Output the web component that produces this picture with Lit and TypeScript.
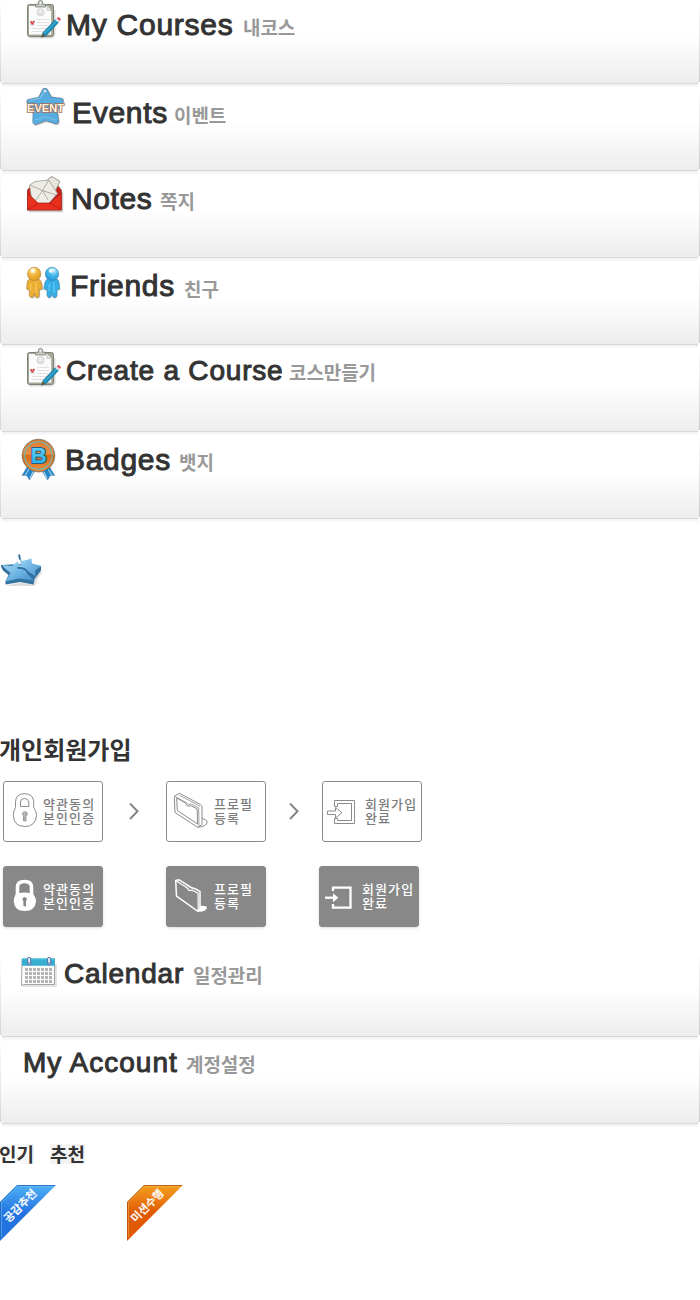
import { LitElement, html, css, svg, nothing } from "lit";
import { customElement, property } from "lit/decorators.js";

const clipboard = svg`
  <path d="M9 37.8H32L34.8 35V10" fill="none" stroke="#000" stroke-opacity=".14" stroke-width="1.4"/>
  <rect x="7.5" y="4.5" width="26" height="32" rx="2" fill="#a3a897" stroke="#7d8372"/>
  <path d="M9 6H27.5L31.2 9.8V34.6H9Z" fill="#fbfbfb"/>
  <path d="M27 6V10.5H31.5Z" fill="#e4e6e2" stroke="#b5b9b0" stroke-width=".6"/>
  <path d="M15.5 7V4.2H18.4V1.4Q20.5-.8 22.6 1.4V4.2H25.5V7Z" fill="#c3c7c4" stroke="#858a83" stroke-width=".9"/>
  <circle cx="20.5" cy="2.6" r=".9" fill="#fff"/>
  <circle cx="20.5" cy="12.3" r="3.5" fill="#f4f4f4" stroke="#c5c5c5" stroke-width=".9"/>
  <path d="M18.6 13Q20.5 15.2 22.4 13M19.3 10.8V11.6M21.7 10.8V11.6" fill="none" stroke="#b5b5b5" stroke-width=".8"/>
  <path d="M17 19.5H29M17 22.5H29M17 25.5H28M12 28.5H27M12 31.5H24" stroke="#dedede" stroke-width=".9"/>
  <rect x="11" y="21.5" width="3" height="3.4" fill="none" stroke="#999" stroke-width=".6"/>
  <path d="M10.6 21.2L12.3 23.8L14.3 20.8" fill="none" stroke="#e22b2b" stroke-width="1.2"/>
  <path d="M21.6 37.2L23 32.6L35.6 19.3L38.8 22.2L26 35.8Z" fill="#1b8fba" stroke="#176f95" stroke-width=".6"/>
  <path d="M24.3 33.6L36.8 20.6" stroke="#55bddd" stroke-width="1"/>
  <path d="M21.3 37.6L22.6 33.4L25.4 36Z" fill="#6d5638"/>
  <path d="M35 19.8L36.8 17.9L40 20.9L38.2 22.8Z" fill="#d9dee2"/>
  <path d="M36.8 18Q38.2 16.4 39.9 17.8T40 20.9Z" fill="#da3b47"/>`;

const starPoints = "25,4 29.8,12.8 40.5,14 34.3,22.2 35.8,34 25.5,30.8 15.6,34.6 16,22.6 9.8,14.8 20.4,12.8";
const eventStar = svg`
  <g stroke-linejoin="round">
    <polygon points=${starPoints} transform="translate(1 1.2)" fill="#000" stroke="#000" stroke-width="6" opacity=".2"/>
    <polygon points=${starPoints} fill="#5f88a2" stroke="#5f88a2" stroke-width="6.4"/>
    <polygon points=${starPoints} fill="#58ade0" stroke="#58ade0" stroke-width="4.8"/>
  </g>
  <path d="M9.5 13.2L20 11.4L23.6 4.6" stroke="#86caf0" fill="none"/>
  <path d="M15 33L25.5 29.4L36 33.2" stroke="#80c6ee" fill="none" stroke-width=".8"/>
  <circle cx="25" cy="4" r="1.5" fill="#e5f5ff" stroke="#7599ae" stroke-width=".4"/>
  <text class="event" x="7" y="25.3" textLength="37" lengthAdjust="spacingAndGlyphs">EVENT</text>`;

const envelope = svg`
  <path d="M9 37.4H42.5V18" fill="none" stroke="#000" stroke-opacity=".2" stroke-width="1.5"/>
  <path d="M7.5 16L11 12H38L41.3 16V36H7.5Z" fill="#c9221c" stroke="#84201b" stroke-width=".7"/>
  <path d="M24 12L28.5 4.6L32 2.6L39.6 7L38.7 10L34 20L24 17Z" fill="#e7e6dd" stroke="#85827a" stroke-width=".8"/>
  <path d="M9.5 11L15 7.6L28.5 6L37.5 19.5L28 30H18L11.5 24Z" fill="#eeede5" stroke="#9b988f" stroke-width=".8"/>
  <path d="M10 11L22.5 16.6L28.5 6.4M22.5 16.6L15.5 26.5M22.5 16.6L36.5 21M22.5 16.6L28 26" fill="none" stroke="#a8a59a" stroke-width=".9"/>
  <path d="M7.5 19L18 29H30L41.3 19V36H7.5Z" fill="#e9301f" stroke="#9d2118" stroke-width=".7"/>
  <path d="M7.8 35.7L18 29M41 35.7L30 29" stroke="#ba231a" stroke-width=".9"/>`;

const personBody = "M10.5 17.5Q7.4 18.5 7 22L6.6 28Q7.6 29.4 9.2 28V34.5Q9.6 37.2 13 36.2L14.2 32.5L15.4 36.2Q18.6 37.2 19.2 34.5V28Q21.2 29.2 22.4 27.6L21.4 22Q20.8 18.5 17.6 17.5Z";
const friends = svg`
  <defs>
    <radialGradient id="gold" cx=".4" cy=".25" r=".8"><stop stop-color="#fff3be"/><stop offset=".45" stop-color="#f2b43a"/><stop offset="1" stop-color="#dc9b20"/></radialGradient>
    <radialGradient id="sky" cx=".4" cy=".25" r=".8"><stop stop-color="#dcf7ff"/><stop offset=".45" stop-color="#45b9ec"/><stop offset="1" stop-color="#2097d5"/></radialGradient>
  </defs>
  <g transform="translate(1 1)" opacity=".22"><path d=${personBody}/><path d=${personBody} transform="translate(17 0)"/></g>
  <g fill="#edae35" stroke="#a8823f" stroke-width=".6"><path d=${personBody}/><circle cx="14.2" cy="12.9" r="6.7" fill="url(#gold)"/></g>
  <g fill="#36aee7" stroke="#3f87ad" stroke-width=".6" transform="translate(46.2 0) scale(-1 1)"><path d=${personBody}/><circle cx="14.2" cy="12.9" r="6.7" fill="url(#sky)"/></g>
  <circle cx="12.9" cy="9.7" r="2" fill="#fff" opacity=".85"/><circle cx="30.7" cy="9.7" r="2" fill="#fff" opacity=".85"/>
  <path d="M11 22.5L10.4 30M16 21V32" stroke="#f8cc68"/><path d="M29.5 22.5L29 30M34 21V32" stroke="#6ed0f6"/>`;

const medal = svg`
  <defs><linearGradient id="bronze" x1="0" y1="0" x2="0" y2="1"><stop stop-color="#e0782c"/><stop offset=".45" stop-color="#e98f48"/><stop offset=".5" stop-color="#d96a18"/><stop offset="1" stop-color="#f0913d"/></linearGradient>
  <linearGradient id="ice" x1="0" y1="0" x2="0" y2="1"><stop stop-color="#72d8fa"/><stop offset="1" stop-color="#1eaae6"/></linearGradient></defs>
  <path d="M7 32L2 40.6L6.6 40.4L9.5 45L16 34ZM29.5 32L34.8 40.6L30.4 40.4L27.5 45L21 34Z" fill="#2387cc" stroke="#6d8ea3" stroke-width=".6"/>
  <path d="M9 34L5.3 40.2M28 34L31.7 40.2M14 35L10 43M23 35L27 43" stroke="#cdeafa" stroke-width=".9"/>
  <circle cx="19" cy="21.2" r="16.6" fill="#000" opacity=".15"/>
  <circle cx="18.4" cy="20.5" r="16.3" fill="url(#bronze)" stroke="#77705f" stroke-width=".8"/>
  <circle cx="18.4" cy="20.5" r="13.7" fill="none" stroke="#62bdb8" stroke-width="1.1"/>
  <text class="medal-letter" x="18.8" y="28">B</text>`;

const calendar = svg`
  <path d="M3 33H36V11" fill="none" stroke="#000" stroke-opacity=".15" stroke-width="1.5"/>
  <path d="M2 6H34.5V31.5H4.5L1.5 32.5Z" fill="#fcfcfc" stroke="#858d91" stroke-width=".8"/>
  <path d="M2 5.5H35V12.7H2Z" fill="#36afd0"/><path d="M2 5.8H35" stroke="#68d1e8"/>
  <g fill="#b5b5b5">${[0, 1, 2, 3].map(r => [0, 1, 2, 3, 4, 5, 6].map(c => svg`<rect x=${5 + c * 4} y=${15 + r * 4} width="3" height="3"/>`))}</g>
  <g fill="#dfe6f3" stroke="#48679f" stroke-width=".9"><circle cx="9.3" cy="10" r="1.9"/><circle cx="29.3" cy="10" r="1.9"/><rect x="7.5" y="4.3" width="3.2" height="6" rx="1.6"/><rect x="27.5" y="4.3" width="3.2" height="6" rx="1.6"/></g>`;

@customElement("section-banner")
class SectionBanner extends LitElement {
  @property() heading = "";
  @property() sub = "";
  @property({ attribute: false }) icon: unknown = null;
  static styles = css`
    :host { display: flex; align-items: flex-start; box-sizing: border-box; width: 700px; height: 87px;
      background:
        linear-gradient(#fff, #d5d5d5) 0 0 / 1px 82px no-repeat,
        linear-gradient(#fff, #c9c9c9) 699px 0 / 1px 82px no-repeat,
        linear-gradient(#d8d8d8, #d8d8d8) 2px 83px / 696px 1px no-repeat,
        linear-gradient(#f0f0f0, #fbfbfb) 2px 84px / 696px 3px no-repeat,
        linear-gradient(#fff 0, #fff 36px, #ededed 83px) 1px 0 / 698px 83px no-repeat, #fff;
      font-family: "Liberation Sans", Arial, sans-serif; white-space: nowrap; }
    svg { flex: none; width: 42px; height: 48px; margin-left: 20px; overflow: visible; }
    .title { flex: none; width: var(--w); margin: var(--ty) 0 0 var(--tx); line-height: 40px; font-size: var(--fs, 30px); letter-spacing: var(--ls, .5px);
      color: #333; -webkit-text-stroke: 1px #333; }
    .sub { margin-top: var(--sy); line-height: 28px; font-size: 19px; font-weight: 700; color: #999; font-family: "Noto Sans CJK KR", sans-serif; letter-spacing: -.1px; }
    .event { font: 700 10.5px "Liberation Sans", sans-serif; fill: #fff2df; stroke: #a0705a; stroke-width: 1.6px; paint-order: stroke; }
    .medal-letter { font: 700 22px "Liberation Sans", sans-serif; text-anchor: middle; fill: url(#ice); stroke: #235f84; stroke-width: 2px; paint-order: stroke; }
  `;
  render() {
    return html`${this.icon ? html`<svg viewBox="0 0 42 48">${this.icon}</svg>` : nothing}
      <span class="title">${this.heading}</span><span class="sub">${this.sub}</span>`;
  }
}

const lock = (on: boolean) => on
  ? svg`<path d="M14.5 30V21Q14.5 15.5 21.5 15.5T28.5 21V30" fill="none" stroke="#fff" stroke-width="3.6"/>
      <path d="M12.5 28.5Q16 26.5 21.5 26.5T30.5 28.5Q33 31.5 33 35.5Q32 45 21.8 45T10.8 35.5Q10.8 31.5 12.5 28.5Z" fill="#fff"/>
      <path d="M21.6 31.2A2.1 2.1 0 0 1 23 35L23.1 40.3H20.5L20.3 35A2.1 2.1 0 0 1 21.6 31.2Z" fill="#888"/>`
  : svg`<g fill="none" stroke="#8c8c8c"><path d="M12.5 26.5V20.5Q13 12.7 21.5 12.7T30.7 20.5V26.5Q33.5 30 33.5 34.5Q32.5 45.5 21.8 45.5T10.3 34.5Q10.3 30 12.5 26.5Z"/>
      <path d="M17.5 25.5V21Q17.5 17.5 21.5 17.5T25.8 21V25.5Z"/><path d="M21.6 31A2 2 0 0 1 22.9 34.8V39.8H20.6V34.8A2 2 0 0 1 21.6 31Z" fill="#bbb"/></g>`;

const folder = (on: boolean) => on
  ? svg`<path d="M33 40Q41 39 41 42Q39 46.5 31 45.5Z" fill="#fff"/>
      <path d="M9.7 14.5L13 13.7L25 21.5L29 22.7L34 25.5L34 42.5L31.5 45L10.5 30.2Z" fill="#888" stroke="#fff" stroke-width="1.5"/>
      <path d="M10.5 15L21 21.8L23.2 24.5L26 24.2L32 27.2L32.3 44" fill="none" stroke="#fff" stroke-width="1.2"/>`
  : svg`<g fill="#fff" stroke="#8c8c8c"><path d="M34 37.5Q42 38 41 42Q39 46 32 46Z"/>
      <path d="M8.3 15.3L13.5 12.3L34.5 23.5Q36 24.3 36 26V43.5L32 46.5L9 31.5Z"/>
      <path d="M10.7 17L19.5 22L21.5 25L25.5 24.8L31.2 28L31.5 43L11.3 29.5Z"/><path d="M9 15.5L20.5 21.8L22.5 23.7L24.8 22.8L32.7 27L33 46M13.5 14.3L34 25.2" fill="none" stroke-width=".8"/></g>`;

const enter = (on: boolean) => on
  ? svg`<path d="M14 25V21.7H31.5V41.7H14V38" fill="none" stroke="#fff" stroke-width="2.3"/>
      <path d="M6 31.7H17" stroke="#fff" stroke-width="2.3"/><path d="M14 27.2L19.4 31.7L14 36.2Z" fill="#fff"/>`
  : svg`<g fill="#fff" stroke="#8c8c8c"><path d="M12.5 25.5V19.5H32.5V42.5H12.5V37.5H15.5V39.5H29.5V22.5H15.5V25.5Z"/>
      <path d="M5.5 30H13.5V26.5L20 31.7L13.5 37V33.5H5.5Z"/></g>`;

@customElement("step-card")
class StepCard extends LitElement {
  @property({ type: Boolean, reflect: true }) on = false;
  @property({ attribute: false }) lines: string[] = [];
  @property({ attribute: false }) icon: (on: boolean) => unknown = lock;
  static styles = css`
    :host { display: flex; flex: none; box-sizing: border-box; width: 100px; height: 61px; border: 1px solid #8a8a8a; border-radius: 3px; color: #7c7c7c; background: #fff; }
    :host([on]) { background: #888; border-color: #888; color: #fff; box-shadow: 0 1px 3px rgba(0, 0, 0, .14); }
    svg { flex: none; width: var(--icon-w, 39px); height: 59px; overflow: visible; }
    .label { margin-top: 15px; font: 500 13px/14px "Noto Sans CJK KR", sans-serif; letter-spacing: 1.1px; white-space: nowrap; }
    .line { display: block; height: 14px; }
  `;
  render() {
    return html`<svg viewBox="1 1 39 59" preserveAspectRatio="xMinYMin">${this.icon(this.on)}</svg>
      <div class="label">${this.lines.map(l => html`<span class="line">${l}</span>`)}</div>`;
  }
}

@customElement("app-root")
class AppRoot extends LitElement {
  static styles = css`
    :host { display: flex; flex-direction: column; width: 700px; height: 1300px; overflow: hidden; background: #fff; font-family: "Noto Sans CJK KR", sans-serif; color: #333; }
    section-banner, .stars, h1, .steps, .tags, .ribbons { flex: none; }
    .courses { --tx: 4px; --w: 177px; --ty: 5px; --sy: 13px; --ls: .75px; }
    .events { --tx: 10px; --w: 102px; --ty: 6px; --sy: 14px; --ls: .7px; }
    .notes { --tx: 9px; --w: 89px; --ty: 5px; --sy: 13px; --ls: .6px; }
    .friends { --tx: 8px; --w: 114px; --ty: 5px; --sy: 14px; --ls: .7px; }
    .create { --tx: 4px; --w: 223px; --ty: 3px; --sy: 10px; --ls: .8px; --fs: 28px; }
    .badges { --tx: 3px; --w: 114px; --ty: 5px; --sy: 13px; --ls: .7px; }
    .calendar { --tx: 2px; --w: 129px; --ty: 1px; --sy: 8px; --ls: .8px; --fs: 28px; }
    .account { --tx: 23px; --w: 163px; --ty: 3px; --sy: 10px; --ls: 1px; --fs: 28px; }
    .stars { width: 44px; height: 34px; margin-top: 30px; }
    h1 { box-sizing: border-box; margin: 144px 0 0 -1px; height: 51px; padding-top: 5px; font-size: 24px; line-height: 28px; font-weight: 700; letter-spacing: 0; }
    .steps { display: flex; height: 61px; padding-left: 3px; }
    .chevron { width: 12px; height: 20px; margin: 20px 26px 0 25px; }
    .chevron.second { margin: 20px 22px 0 22px; }
    .filled { margin-top: 24px; margin-bottom: 26px; gap: 63px; }
    .profile { --icon-w: 47px; }
    .finish { --icon-w: 42px; }
    .filled .finish { margin-left: -10px; }
    .tags { display: flex; gap: 16px; margin-top: 17px; height: 20px; font-size: 19px; font-weight: 700; line-height: 20px; letter-spacing: -.1px; }
    .tag { width: 34px; background: linear-gradient(90deg, #fff, #f3f3f3); white-space: nowrap; text-indent: -1px; }
    .tag + .tag { width: 35px; background: #f3f3f3; text-indent: 0; }
    .ribbons { display: flex; gap: 71px; margin-top: 21px; }
    .ribbon { width: 56px; height: 56px; }
    .ribbon text { font: 500 11px "Noto Sans CJK KR", sans-serif; fill: #fff; stroke: #fff; stroke-width: .3px; text-anchor: middle; }
  `;

  private chevron(cls: string) {
    return html`<svg class="chevron ${cls}" viewBox="0 0 12 20"><path d="M2 2.5L9.5 10.2L2 18" fill="none" stroke="#858585" stroke-width="2"/></svg>`;
  }

  private ribbon(id: string, top: string, bottom: string, edge: string, shade: string, text: string) {
    return html`<svg class="ribbon" viewBox="0 0 56 56">
      <defs><linearGradient id=${id} x1="0" y1="0" x2="0" y2="1"><stop stop-color=${top}/><stop offset=".5" stop-color=${bottom}/></linearGradient></defs>
      <path d="M17 0H56L0 56V17Z" fill="url(#${id})"/>
      <path d="M.5 54V17.2L17.2 .5H55" fill="none" stroke=${shade} stroke-opacity=".8"/>
      <path d="M1.5 52V17.6L17.6 1.5H53" fill="none" stroke=${edge} stroke-opacity=".5"/>
      <text transform="translate(23 23.5) rotate(-45)" textLength="41" x="0" y="0">${text}</text></svg>`;
  }

  render() {
    const agree = ["약관동의", "본인인증"], profile = ["프로필", "등록"], finish = ["회원가입", "완료"];
    return html`
      <section-banner class="courses" heading="My Courses" sub="내코스" .icon=${clipboard}></section-banner>
      <section-banner class="events" heading="Events" sub="이벤트" .icon=${eventStar}></section-banner>
      <section-banner class="notes" heading="Notes" sub="쪽지" .icon=${envelope}></section-banner>
      <section-banner class="friends" heading="Friends" sub="친구" .icon=${friends}></section-banner>
      <section-banner class="create" heading="Create a Course" sub="코스만들기" .icon=${clipboard}></section-banner>
      <section-banner class="badges" heading="Badges" sub="뱃지" .icon=${medal}></section-banner>
      <svg class="stars" viewBox="0 0 44 34">
        <defs>
          <linearGradient id="face" x1="0" y1="0" x2="1" y2="1"><stop stop-color="#a9dcf8"/><stop offset=".55" stop-color="#6db4e2"/><stop offset="1" stop-color="#4690c8"/></linearGradient>
          <filter id="soft"><feGaussianBlur stdDeviation="1"/></filter>
          <filter id="edge"><feGaussianBlur stdDeviation=".35"/></filter>
        </defs>
        <path d="M7 35L20 32L33 34L36 26L41 19" fill="none" stroke="#000" stroke-opacity=".25" stroke-width="2" filter="url(#soft)"/>
        <g filter="url(#edge)">
          <path d="M1 13L3 18.5L8.5 23L5.5 29V32.5L20 30L33.5 32.5L34.5 27L41 18.5V14L20 12Z" fill="#33729f"/>
          <path d="M1 13L12 14L17.5 9.5L20 14L31 15L27 21.5L34 28.5L19.5 26.5L5.5 29.5L10.5 21Z" fill="url(#face)"/>
          <path d="M18.5 3.5L22.5 9L31.5 6.5L32 11.5L41.5 14L35 18.5L35.5 26L28 21.5Q24 16.5 17 16L21 12Z" fill="url(#face)"/>
          <path d="M17.5 16Q25 15.5 28 20.5L35 25" fill="none" stroke="#2d6e9e" stroke-width="1.8"/>
          <path d="M19 2.5L20 7.5M1.5 13.5L4 17.5" stroke="#2f6a93" stroke-width="1.8"/>
        </g>
      </svg>
      <h1>개인회원가입</h1>
      <div class="steps outline">
        <step-card .lines=${agree} .icon=${lock}></step-card>${this.chevron("")}
        <step-card class="profile" .lines=${profile} .icon=${folder}></step-card>${this.chevron("second")}
        <step-card class="finish" .lines=${finish} .icon=${enter}></step-card>
      </div>
      <div class="steps filled">
        <step-card on .lines=${agree} .icon=${lock}></step-card>
        <step-card on class="profile" .lines=${profile} .icon=${folder}></step-card>
        <step-card on class="finish" .lines=${finish} .icon=${enter}></step-card>
      </div>
      <section-banner class="calendar" heading="Calendar" sub="일정관리" .icon=${calendar}></section-banner>
      <section-banner class="account" heading="My Account" sub="계정설정"></section-banner>
      <div class="tags"><span class="tag">인기</span><span class="tag">추천</span></div>
      <div class="ribbons">
        ${this.ribbon("blue", "#4fb0f5", "#2273e0", "#79c3fa", "#2069bd", "공감추천")}
        ${this.ribbon("orange", "#f5a01f", "#e05a05", "#f9b75c", "#b35311", "미션수행")}
      </div>`;
  }
}
